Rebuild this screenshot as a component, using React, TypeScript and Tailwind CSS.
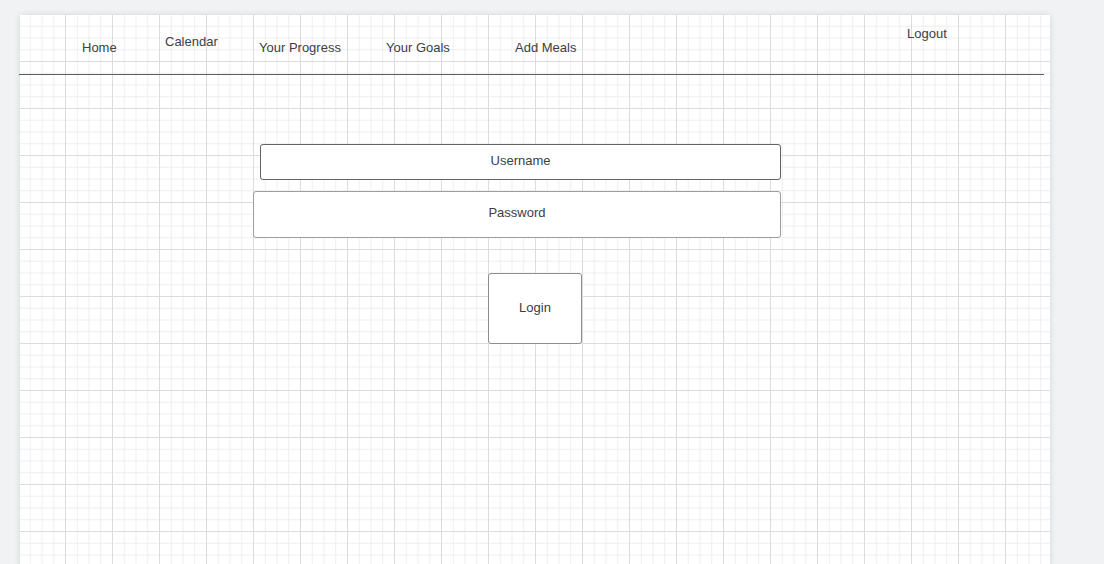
import React from 'react';

const navItems = [
  { label: 'Home', width: 'w-[83px]', top: 'mt-[15px]' },
  { label: 'Calendar', width: 'w-[94px]', top: 'mt-[9px]' },
  { label: 'Your Progress', width: 'w-[127px]', top: 'mt-[15px]' },
  { label: 'Your Goals', width: 'w-[129px]', top: 'mt-[15px]' },
  { label: 'Add Meals', width: 'w-[392px]', top: 'mt-[15px]' },
  { label: 'Logout', width: 'w-[60px]', top: 'mt-[1px]' },
];

const App: React.FC = () => {
  return (
    <div className="h-screen overflow-hidden bg-[#f1f2f4] pt-[15px] pl-[20px] font-['Liberation_Sans',Arial,sans-serif] text-[13px] leading-[15px] text-[#3c4043]">
      {/* Wireframe canvas */}
      <div className="relative h-[560px] w-[1030px] bg-white shadow-[0_0_6px_rgba(0,0,0,0.12)] [background-image:linear-gradient(to_right,#dcdcdc_1px,transparent_1px),linear-gradient(to_bottom,#dcdcdc_1px,transparent_1px),linear-gradient(to_right,#eeeeee_1px,transparent_1px),linear-gradient(to_bottom,#eeeeee_1px,transparent_1px)] [background-size:47px_47px,47px_47px,11.75px_11.75px,11.75px_11.75px] [background-position:-2px_-1px]">
        {/* Header */}
        <div className="flex h-[59px] items-start pt-[10px] pl-[62px]">
          {navItems.map((item) => (
            <span key={item.label} className={`${item.width} ${item.top} shrink-0 whitespace-nowrap`}>
              {item.label}
            </span>
          ))}
        </div>
        <div className="-ml-px h-px w-[1025px] bg-[#5a5d62]" />

        {/* Login form */}
        <div className="flex flex-col items-start">
          <div className="mt-[69px] ml-[240px] flex h-[36px] w-[521px] items-center justify-center rounded-[3px] border border-[#5f6368] bg-white pb-[3px]">
            Username
          </div>
          <div className="mt-[11px] ml-[233px] flex h-[47px] w-[528px] items-center justify-center rounded-[3px] border border-[#9a9da1] bg-white pb-[5px]">
            Password
          </div>
          <div className="mt-[35px] ml-[468px] flex h-[71px] w-[94px] items-center justify-center rounded-[3px] border border-[#8a8d91] bg-white pb-[2px]">
            Login
          </div>
        </div>
      </div>
    </div>
  );
};

export default App;
